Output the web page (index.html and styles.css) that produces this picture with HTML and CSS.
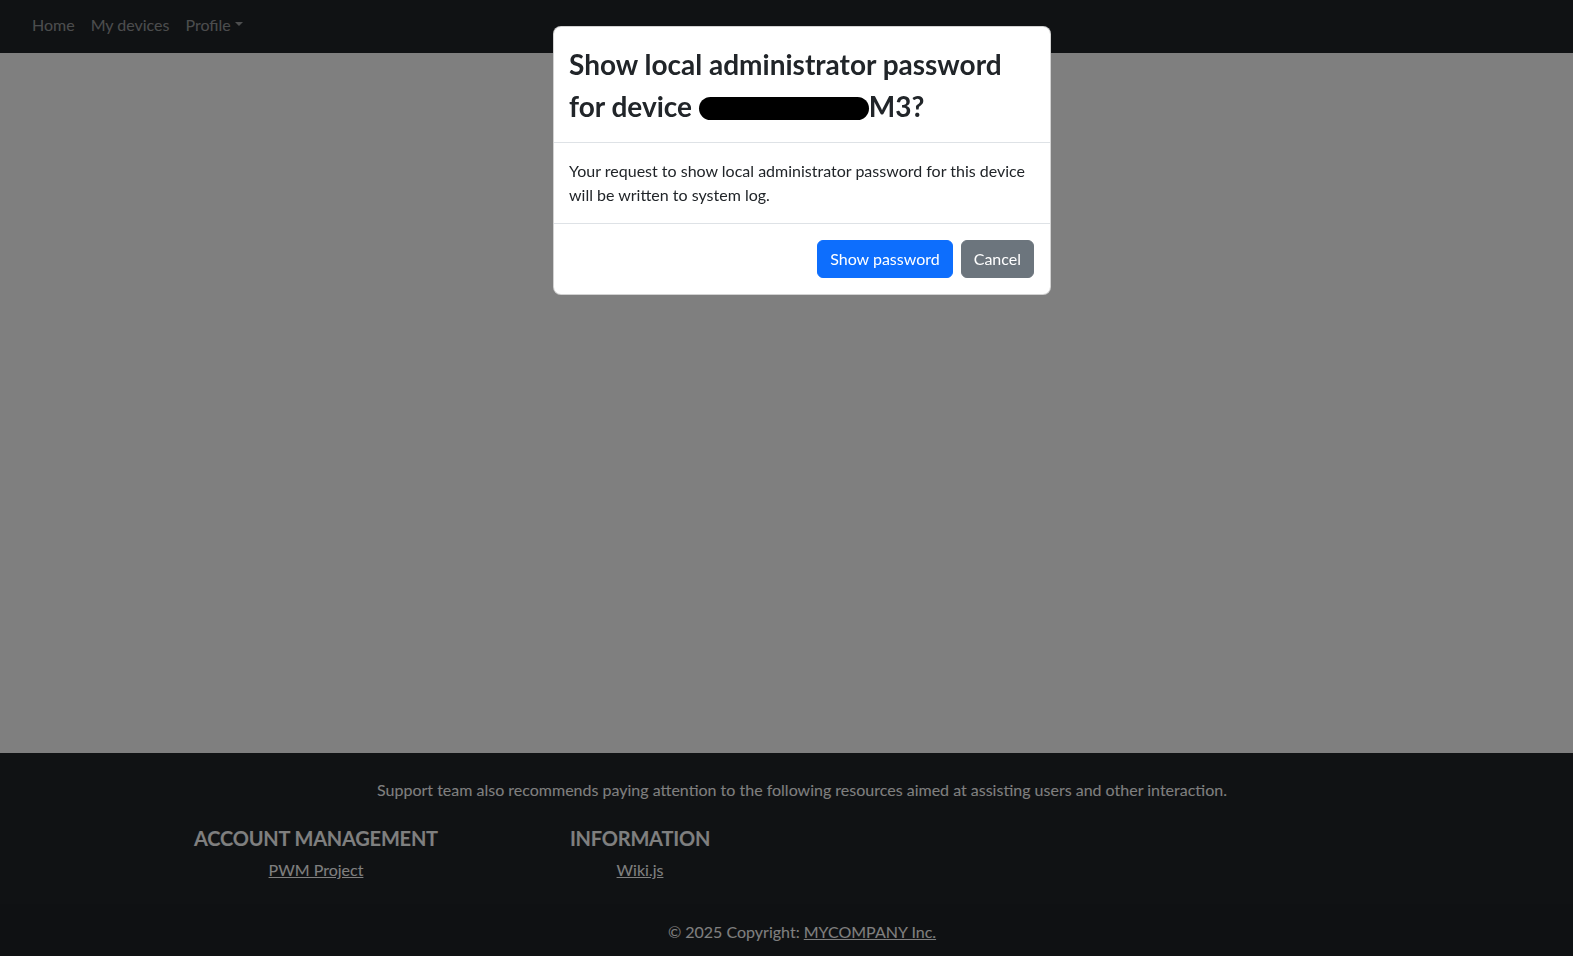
FILE: index.html
```html
<!DOCTYPE html>
<html lang="en">
<head>
<meta charset="utf-8">
<title>My devices</title>
<link rel="stylesheet" href="styles.css">
</head>
<body>
<div class="page">
  <nav class="navbar">
    <ul class="nav">
      <li><a class="nav-link" href="#">Home</a></li>
      <li><a class="nav-link" href="#">My devices</a></li>
      <li><a class="nav-link dropdown-toggle" href="#">Profile</a></li>
    </ul>
  </nav>

  <main class="main"></main>

  <footer class="site-footer">
    <div class="footer-inner">
      <p class="footer-intro">Support team also recommends paying attention to the following resources aimed at assisting users and other interaction.</p>
      <div class="footer-cols">
        <div class="footer-col">
          <h5 class="footer-heading">ACCOUNT MANAGEMENT</h5>
          <a class="footer-link" href="#">PWM Project</a>
        </div>
        <div class="footer-col">
          <h5 class="footer-heading">INFORMATION</h5>
          <a class="footer-link" href="#">Wiki.js</a>
        </div>
      </div>
    </div>
    <div class="copyright">© 2025 Copyright: <a class="footer-link" href="#">MYCOMPANY Inc.</a></div>
  </footer>
</div>

<div class="modal-backdrop"></div>
<div class="modal">
  <div class="modal-content">
    <div class="modal-header">
      <h3 class="modal-title">Show local administrator password for device <span class="redacted"></span>M3?</h3>
    </div>
    <div class="modal-body">
      <p class="modal-text">Your request to show local administrator password for this device will be written to system log.</p>
    </div>
    <div class="modal-footer">
      <button class="btn btn-primary" type="button">Show password</button>
      <button class="btn btn-secondary" type="button">Cancel</button>
    </div>
  </div>
</div>
</body>
</html>
```

FILE: styles.css
```css
* { box-sizing: border-box; }

html, body {
  margin: 0;
  padding: 0;
  overflow: hidden;
}

body {
  font-family: Lato, "Noto Sans", "Liberation Sans", sans-serif;
  font-size: 16px;
  line-height: 1.5;
  color: #212529;
  background: #fff;
}

.page {
  display: flex;
  flex-direction: column;
}

/* Navbar */
.navbar {
  height: 53px;
  background: #212529;
  display: flex;
  align-items: center;
  padding: 0 16px 4px 24px;
}

.nav {
  list-style: none;
  margin: 0;
  padding: 0;
  display: flex;
}

.nav-link {
  display: block;
  padding: 8px 8px;
  color: rgba(255, 255, 255, 0.55);
  text-decoration: none;
}

.dropdown-toggle::after {
  display: inline-block;
  margin-left: 0.255em;
  vertical-align: 0.255em;
  content: "";
  border-top: 0.3em solid;
  border-right: 0.3em solid transparent;
  border-left: 0.3em solid transparent;
  border-bottom: 0;
}

/* Main */
.main {
  min-height: 700px;
  background: #fff;
}

/* Footer */
.site-footer {
  background: #212529;
  color: #fff;
}

.footer-inner {
  width: 1296px;
  margin-left: 154px;
  padding: 25px 0 22px;
}

.footer-intro {
  margin: 0 0 24px;
  text-align: center;
}

.footer-cols {
  display: flex;
}

.footer-col {
  width: 324px;
  text-align: center;
}

.footer-heading {
  margin: 0 0 8px;
  font-size: 20px;
  line-height: 1.2;
  font-weight: 700;
  letter-spacing: -0.01em;
}

.footer-link {
  color: #fff;
  text-decoration: underline;
}

.copyright {
  background: rgba(0, 0, 0, 0.05);
  padding: 16px 0 16px 31px;
  text-align: center;
}

/* Modal */
.modal-backdrop {
  position: fixed;
  inset: 0;
  background: rgba(0, 0, 0, 0.5);
}

.modal {
  position: fixed;
  top: 26px;
  left: 553px;
  width: 498px;
}

.modal-content {
  background: #fff;
  border: 1px solid rgba(0, 0, 0, 0.175);
  border-radius: 8px;
  display: flex;
  flex-direction: column;
}

.modal-header {
  padding: 16px 16px 15px 15px;
  border-bottom: 1px solid #dee2e6;
}

.modal-title {
  margin: 0;
  font-size: 28px;
  line-height: 42px;
  font-weight: 700;
}

.redacted {
  display: inline-block;
  width: 170px;
  height: 23px;
  background: #000;
  border-radius: 12px;
  vertical-align: -3px;
}

.modal-body {
  padding: 16px 16px 16px 15px;
}

.modal-text {
  margin: 0;
}

.modal-footer {
  display: flex;
  justify-content: flex-end;
  align-items: center;
  padding: 12px;
  border-top: 1px solid #dee2e6;
}

.btn {
  margin: 4px;
  padding: 6px 12px;
  font-family: inherit;
  font-size: 16px;
  line-height: 24px;
  border: 1px solid transparent;
  border-radius: 6px;
  color: #fff;
  cursor: pointer;
}

.btn-primary {
  background: #0d6efd;
  border-color: #0d6efd;
}

.btn-secondary {
  background: #6c757d;
  border-color: #6c757d;
}
```
